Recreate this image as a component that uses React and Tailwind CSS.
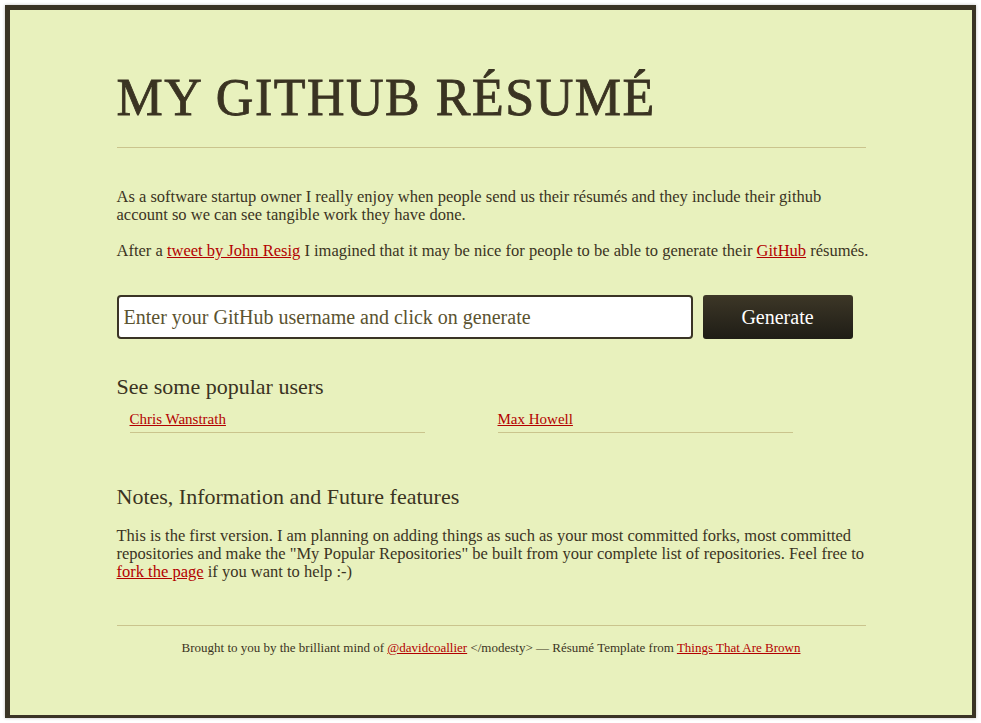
export default function App() {
  return (
    <div className="min-h-[723px] bg-white px-[5px] pt-[5px] font-['Liberation_Serif',serif] text-[#3b3423]">
      <div className="h-[713px] border-t-[5px] border-l-[5px] border-r-[4px] border-b-[3px] border-[#3a3425] bg-[#e8f1bd] shadow-[0_0_3px_rgba(0,0,0,0.25)]">
        <div className="mx-auto w-[749px] pt-[62px]">
          <h1 className="text-[52px] leading-[52px] tracking-[1.5px] text-[#3a3322] [-webkit-text-stroke:0.8px_#3a3322]">MY GITHUB RÉSUMÉ</h1>
          <hr className="mt-[23px] border-0 border-t border-[#cac48d]" />

          <p className="mt-[40px] text-[16.5px] leading-[18px]">
            As a software startup owner I really enjoy when people send us their résumés and they include their github
            <br />
            account so we can see tangible work they have done.
          </p>
          <p className="mt-[18px] whitespace-nowrap text-[16.5px] leading-[18px]">
            After a <a href="#" className="text-[#b30000] underline">tweet by John Resig</a> I imagined that it may be nice for people to be able to generate their{" "}
            <a href="#" className="text-[#b30000] underline">GitHub</a> résumés.
          </p>

          <div className="mt-[35px] flex gap-[10px]">
            <input
              type="text"
              placeholder="Enter your GitHub username and click on generate"
              className="h-[44px] w-[576px] rounded-[4px] border-2 border-[#3a3425] bg-white pl-[5px] text-[20px] text-[#3b3423] outline-none placeholder:text-[#5b5330] placeholder:opacity-100"
            />
            <button className="h-[44px] w-[150px] rounded-[3px] bg-gradient-to-b from-[#3d3727] to-[#1f1d16] text-[20px] text-white">
              Generate
            </button>
          </div>

          <h2 className="mt-[35px] text-[22px] leading-[26px] text-[#3a3322]">See some popular users</h2>
          <div className="mt-[10px] flex gap-[73px] pl-[13px]">
            <div className="w-[295px] border-b border-[#cac48d] pb-[4px] text-[15px] leading-[18px]">
              <a href="#" className="text-[#b30000] underline">Chris Wanstrath</a>
            </div>
            <div className="w-[295px] border-b border-[#cac48d] pb-[4px] text-[15px] leading-[18px]">
              <a href="#" className="text-[#b30000] underline">Max Howell</a>
            </div>
          </div>

          <h2 className="mt-[51px] text-[22px] leading-[26px] text-[#3a3322]">Notes, Information and Future features</h2>
          <p className="mt-[17px] text-[16.5px] leading-[18px]">
            This is the first version. I am planning on adding things as such as your most committed forks, most committed
            <br />
            repositories and make the "My Popular Repositories" be built from your complete list of repositories. Feel free to
            <br />
            <a href="#" className="text-[#b30000] underline">fork the page</a> if you want to help :-)
          </p>

          <hr className="mt-[44px] border-0 border-t border-[#cac48d]" />
          <p className="mt-[14px] text-center text-[13px] leading-[16px]">
            Brought to you by the brilliant mind of <a href="#" className="text-[#b30000] underline">@davidcoallier</a> &lt;/modesty&gt; — Résumé Template from{" "}
            <a href="#" className="text-[#b30000] underline">Things That Are Brown</a>
          </p>
        </div>
      </div>
    </div>
  );
}
